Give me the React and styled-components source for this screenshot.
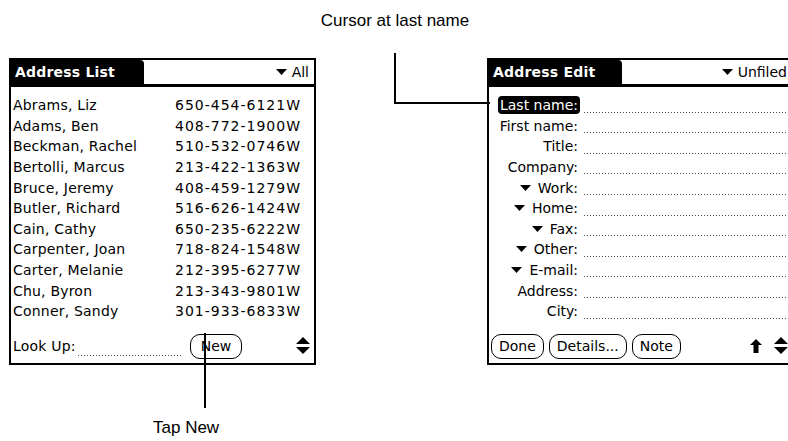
import React from "react";
import styled, { createGlobalStyle } from "styled-components";

const GlobalStyle = createGlobalStyle`
  html, body {
    margin: 0;
    padding: 0;
    background: #fff;
  }
`;

const palmFont = `"DejaVu Sans", "Liberation Sans", sans-serif`;

const contacts = [
  { name: "Abrams, Liz", phone: "650-454-6121" },
  { name: "Adams, Ben", phone: "408-772-1900" },
  { name: "Beckman, Rachel", phone: "510-532-0746" },
  { name: "Bertolli, Marcus", phone: "213-422-1363" },
  { name: "Bruce, Jeremy", phone: "408-459-1279" },
  { name: "Butler, Richard", phone: "516-626-1424" },
  { name: "Cain, Cathy", phone: "650-235-6222" },
  { name: "Carpenter, Joan", phone: "718-824-1548" },
  { name: "Carter, Melanie", phone: "212-395-6277" },
  { name: "Chu, Byron", phone: "213-343-9801" },
  { name: "Conner, Sandy", phone: "301-933-6833" },
];

const fields = [
  { label: "Last name:", active: true },
  { label: "First name:" },
  { label: "Title:" },
  { label: "Company:" },
  { label: "Work:", drop: true },
  { label: "Home:", drop: true },
  { label: "Fax:", drop: true },
  { label: "Other:", drop: true },
  { label: "E-mail:", drop: true },
  { label: "Address:" },
  { label: "City:" },
];

const Page = styled.div`
  position: relative;
  width: 788px;
  height: 441px;
  overflow: hidden;
  background: #fff;
`;

const Screens = styled.div`
  display: flex;
  gap: 171px;
  padding: 58px 0 0 9px;
`;

const Screen = styled.div`
  flex: none;
  width: 307px;
  height: 307px;
  box-sizing: border-box;
  border: 2px solid #000;
  display: flex;
  flex-direction: column;
  font-family: ${palmFont};
  font-size: 14px;
  color: #000;
`;

const TitleBar = styled.div`
  display: flex;
  align-items: stretch;
  height: 27px;
  box-sizing: border-box;
  border-bottom: 3px solid #000;
`;

const Tab = styled.div`
  width: 133px;
  background: #000;
  color: #fff;
  font-weight: bold;
  font-size: 14px;
  display: flex;
  align-items: center;
  padding-left: 4px;
  box-sizing: border-box;
  border-top-right-radius: 4px;
  letter-spacing: 0.2px;
`;

const Category = styled.div`
  margin-left: auto;
  display: flex;
  align-items: center;
  gap: 5px;
  padding-right: 5px;
  white-space: nowrap;
`;

const Body = styled.div`
  padding-top: 8px;
  display: flex;
  flex-direction: column;
`;

const Row = styled.div`
  display: flex;
  align-items: center;
  height: 20.6px;
  white-space: nowrap;
`;

const Name = styled.span`
  padding-left: 2px;
  letter-spacing: 0.2px;
`;

const Phone = styled.span`
  margin-left: auto;
  padding-right: 13px;
  letter-spacing: 1px;
`;

const Label = styled.div`
  width: 91px;
  flex: none;
  display: flex;
  justify-content: flex-end;
  align-items: center;
  gap: 5px;
`;

const LabelText = styled.span`
  padding: 0 2px;
  line-height: 18px;
  border-radius: 4px;
  background: ${(p) => (p.$active ? "#000" : "transparent")};
  color: ${(p) => (p.$active ? "#fff" : "#000")};
`;

const Dots = styled.div`
  flex: 1;
  height: 1px;
  align-self: flex-end;
  margin: 0 0 3px 4px;
  background: repeating-linear-gradient(to right, #444 0 1px, transparent 1px 3px);
`;

const Footer = styled.div`
  margin-top: auto;
  height: 30px;
  display: flex;
  align-items: center;
  padding: 0 4px 2px 0;
  white-space: nowrap;
`;

const PalmButton = styled.div`
  height: 25px;
  box-sizing: border-box;
  border: 1px solid #000;
  border-radius: 10px;
  padding: 0 ${(p) => p.$pad || 7}px;
  display: flex;
  align-items: center;
  margin-left: ${(p) => p.$gap || 0}px;
`;

const LookUpDots = styled.div`
  width: 104px;
  height: 1px;
  align-self: center;
  margin: 18px 8px 0 2px;
  background: repeating-linear-gradient(to right, #444 0 1px, transparent 1px 3px);
`;

const Spacer = styled.div`
  flex: 1;
`;

const ShiftMark = styled.div`
  display: flex;
  margin-right: 12px;
`;

const Overlay = styled.svg`
  position: absolute;
  left: 0;
  top: 0;
  pointer-events: none;
`;

const Caption = styled.div`
  position: absolute;
  top: ${(p) => p.$top}px;
  left: ${(p) => p.$left}px;
  font-family: "Liberation Sans", Arial, sans-serif;
  font-size: 17px;
  color: #000;
  white-space: nowrap;
  transform: ${(p) => (p.$center ? "translateX(-50%)" : "none")};
`;

const DownTri = () => (
  <svg width="11" height="6" viewBox="0 0 11 6">
    <polygon points="0,0 11,0 5.5,6" fill="#000" />
  </svg>
);

const ScrollArrows = () => (
  <svg width="14" height="18" viewBox="0 0 14 18">
    <polygon points="7,0 14,7 0,7" fill="#000" />
    <polygon points="0,10 14,10 7,17" fill="#000" />
  </svg>
);

const UpArrow = () => (
  <svg width="12" height="14" viewBox="0 0 12 14">
    <polygon points="6,0 12,6 8.5,6 8.5,14 3.5,14 3.5,6 0,6" fill="#000" />
  </svg>
);

const AddressList = () => (
  <Screen>
    <TitleBar>
      <Tab>Address List</Tab>
      <Category>
        <DownTri />
        All
      </Category>
    </TitleBar>
    <Body>
      {contacts.map(({ name, phone }) => (
        <Row key={name}>
          <Name>{name}</Name>
          <Phone>{phone}W</Phone>
        </Row>
      ))}
    </Body>
    <Footer>
      <Name>Look Up:</Name>
      <LookUpDots />
      <PalmButton $pad={10}>New</PalmButton>
      <Spacer />
      <ScrollArrows />
    </Footer>
  </Screen>
);

const AddressEdit = () => (
  <Screen>
    <TitleBar>
      <Tab>Address Edit</Tab>
      <Category>
        <DownTri />
        Unfiled
      </Category>
    </TitleBar>
    <Body>
      {fields.map(({ label, active, drop }) => (
        <Row key={label}>
          <Label>
            {drop && <DownTri />}
            <LabelText $active={active}>{label}</LabelText>
          </Label>
          <Dots />
        </Row>
      ))}
    </Body>
    <Footer>
      <PalmButton $gap={2}>Done</PalmButton>
      <PalmButton $gap={5}>Details...</PalmButton>
      <PalmButton $gap={5}>Note</PalmButton>
      <Spacer />
      <ShiftMark>
        <UpArrow />
      </ShiftMark>
      <ScrollArrows />
    </Footer>
  </Screen>
);

export default function App() {
  return (
    <Page>
      <GlobalStyle />
      <Screens>
        <AddressList />
        <AddressEdit />
      </Screens>
      <Overlay width="788" height="441">
        <line x1="395" y1="53" x2="395" y2="104" stroke="#000" strokeWidth="2" />
        <line x1="394" y1="103" x2="490" y2="103" stroke="#000" strokeWidth="2" />
        <line x1="205" y1="333" x2="205" y2="408" stroke="#000" strokeWidth="2" />
      </Overlay>
      <Caption $top={11} $left={395} $center>
        Cursor at last name
      </Caption>
      <Caption $top={418} $left={153}>
        Tap New
      </Caption>
    </Page>
  );
}
